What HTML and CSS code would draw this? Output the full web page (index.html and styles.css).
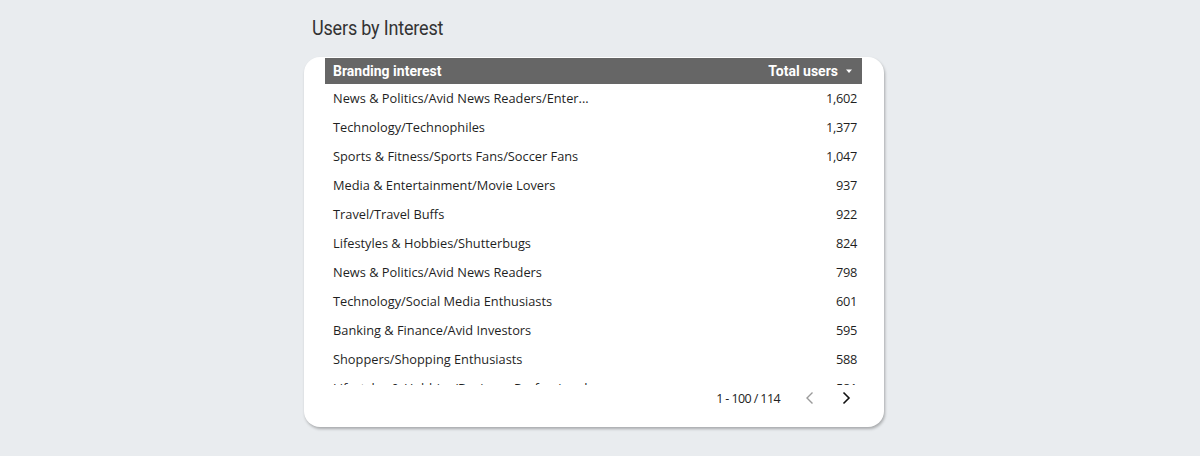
FILE: index.html
```html
<!DOCTYPE html>
<html>
<head>
<meta charset="utf-8">
<link rel="stylesheet" href="styles.css">
</head>
<body>
<div class="wrap">
  <h1 class="title">Users by Interest</h1>
  <div class="card">
    <div class="head">
      <span class="hcol">Branding interest</span>
      <span class="hcol sort">Total users <svg width="8" height="8" viewBox="0 0 8 8"><path d="M1 2.5h6L4 6z" fill="#fff"/></svg></span>
    </div>
    <div class="rows">
      <div class="row"><span class="name">News &amp; Politics/Avid News Readers/Enter...</span><span class="num">1,602</span></div>
      <div class="row"><span class="name">Technology/Technophiles</span><span class="num">1,377</span></div>
      <div class="row"><span class="name">Sports &amp; Fitness/Sports Fans/Soccer Fans</span><span class="num">1,047</span></div>
      <div class="row"><span class="name">Media &amp; Entertainment/Movie Lovers</span><span class="num">937</span></div>
      <div class="row"><span class="name">Travel/Travel Buffs</span><span class="num">922</span></div>
      <div class="row"><span class="name">Lifestyles &amp; Hobbies/Shutterbugs</span><span class="num">824</span></div>
      <div class="row"><span class="name">News &amp; Politics/Avid News Readers</span><span class="num">798</span></div>
      <div class="row"><span class="name">Technology/Social Media Enthusiasts</span><span class="num">601</span></div>
      <div class="row"><span class="name">Banking &amp; Finance/Avid Investors</span><span class="num">595</span></div>
      <div class="row"><span class="name">Shoppers/Shopping Enthusiasts</span><span class="num">588</span></div>
      <div class="row"><span class="name">Lifestyles &amp; Hobbies/Business Professionals</span><span class="num">581</span></div>
    </div>
    <div class="pager">
      <span class="range">1 - 100 / 114</span>
      <svg class="chev" width="12" height="14" viewBox="0 0 12 14"><path d="M8.5 1.5L3 7l5.5 5.5" fill="none" stroke="#9a9a9a" stroke-width="1.4"/></svg>
      <svg class="chev" width="12" height="14" viewBox="0 0 12 14"><path d="M3.5 1.5L9 7l-5.5 5.5" fill="none" stroke="#111" stroke-width="1.6"/></svg>
    </div>
  </div>
</div>
</body>
</html>
```
FILE: styles.css
```css
html, body {
  margin: 0;
  padding: 0;
  background: #e9ecef;
}
body {
  height: 456px;
  overflow: hidden;
}
.wrap {
  width: 580px;
  margin-left: 304px;
  padding-top: 14px;
}
.title {
  margin: 0 0 0 8px;
  height: 29px;
  font-family: Roboto, sans-serif;
  font-weight: 400;
  font-size: 20px;
  line-height: 29px;
  letter-spacing: -0.2px;
  color: #333;
  transform: scaleX(0.9);
  transform-origin: left center;
}
.card {
  margin-top: 14px;
  height: 370px;
  box-sizing: border-box;
  background: #fff;
  border-radius: 16px;
  box-shadow: 1px 2px 3px rgba(0,0,0,0.28);
  padding: 1px 22px 0 21px;
  display: flex;
  flex-direction: column;
}
.head {
  height: 26px;
  background: #666;
  display: flex;
  align-items: center;
  justify-content: space-between;
  padding: 0 9px 0 8px;
  font-family: Roboto, sans-serif;
  font-weight: 700;
  font-size: 14px;
  color: #fff;
}
.sort {
  display: flex;
  align-items: center;
  gap: 7px;
}
.rows {
  height: 302px;
  overflow: hidden;
  margin-top: -1px;
}
.row {
  height: 29px;
  display: flex;
  align-items: center;
  justify-content: space-between;
  padding: 0 5px 0 8px;
  font-family: "Open Sans", sans-serif;
  font-size: 12.8px;
  color: #1f1f1f;
}
.num {
  letter-spacing: -0.3px;
}
.pager {
  height: 26px;
  display: flex;
  align-items: center;
  justify-content: flex-end;
  padding-right: 10px;
  font-family: "Open Sans", sans-serif;
  font-size: 12.5px;
  color: #222;
}
.range {
  margin-right: 24px;
  letter-spacing: -0.6px;
}
.chev + .chev {
  margin-left: 24px;
}
```
